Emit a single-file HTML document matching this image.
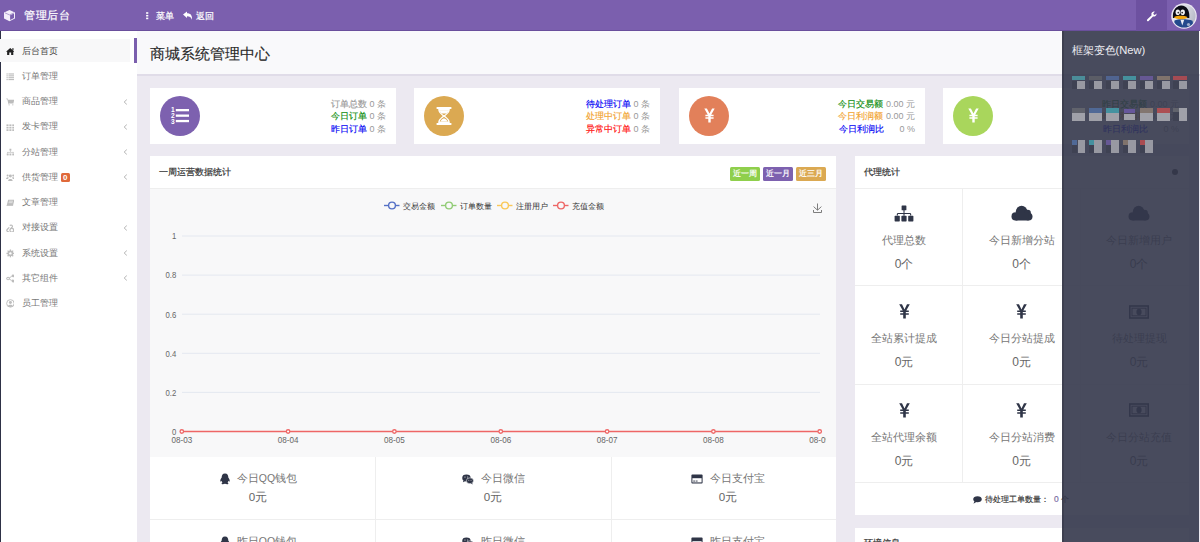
<!DOCTYPE html>
<html><head><meta charset="utf-8">
<style>
*{margin:0;padding:0;box-sizing:border-box}
html,body{width:1200px;height:542px;overflow:hidden;background:#ece9f1;font-family:"Liberation Sans",sans-serif;color:#333}
.a{position:absolute}
.t{position:absolute;white-space:nowrap;line-height:1}
#hdr{left:0;top:0;width:1200px;height:31px;background:#7b5fae;border-bottom:1px solid #6a4f9c}
#side{left:0;top:31px;width:137px;height:511px;background:#fff;border-left:1.2px solid #2e3146}
.si{position:absolute;left:0;width:137px;height:25px}
.si .tx{position:absolute;left:22px;top:0;line-height:25px;font-size:9px;color:#666}
.si .ic{position:absolute;left:6px;top:8px;width:9px;height:9px}
.si .chev{position:absolute;left:122px;top:0;line-height:25px;font-size:9px;color:#aaa}
.card{position:absolute;top:88px;width:246px;height:56px;background:#fff}
.circ{position:absolute;left:10px;top:8px;width:40px;height:40px;border-radius:50%}
.ct{position:absolute;right:10px;top:10px;font-size:9px;line-height:12.45px;text-align:right;white-space:nowrap;color:#999}
.panel{position:absolute;background:#fff}
.ct span{-webkit-text-stroke:0.15px currentColor}
</style></head><body>
<!-- header -->
<div id="hdr" class="a"></div>
<svg class="a" style="left:3px;top:9px" width="13" height="13" viewBox="0 0 13 13">
<polygon points="6.5,1 12,3.6 12,9.6 6.5,12.2 1,9.6 1,3.6" fill="#f3eefa"/>
<polygon points="7.1,6.3 11,4.5 11,9 7.1,10.9" fill="#7b5fae"/>
<polyline points="2,3.9 6.5,5.9 11,3.9" fill="none" stroke="#9f8cc6" stroke-width="0.8"/>
</svg>
<div class="t" style="left:24.3px;top:9.7px;font-size:11.4px;letter-spacing:0.5px;color:#fff;-webkit-text-stroke:0.2px #fff">管理后台</div>
<svg class="a" style="left:145px;top:11px" width="5" height="9" viewBox="0 0 5 9"><rect x="1.1" y="1.2" width="2.2" height="1.6" fill="#fff"/><rect x="1.1" y="3.9" width="2.2" height="1.6" fill="#fff"/><rect x="1.1" y="6.6" width="2.2" height="1.6" fill="#fff"/></svg>
<div class="t" style="left:155.5px;top:11.8px;font-size:9px;color:#fff;-webkit-text-stroke:0.2px #fff">菜单</div>
<svg class="a" style="left:182px;top:11px" width="11" height="9" viewBox="0 0 11 9"><path d="M1,3.6 L5,0.4 L5,2.3 C8.5,2.3 10.3,4.3 10,8.8 C9.2,6.2 7.6,5.2 5,5.2 L5,7 Z" fill="#fff"/></svg>
<div class="t" style="left:196px;top:11.8px;font-size:9px;color:#fff;-webkit-text-stroke:0.2px #fff">返回</div>
<div class="a" style="left:1136px;top:0;width:31px;height:31px;background:#6d51a0"></div>
<svg class="a" style="left:1146px;top:11px" width="11" height="11" viewBox="0 0 11 11"><path d="M1.2,8.6 L5.6,4.2 C5.0,2.6 5.6,1.1 7.2,0.7 C7.8,0.55 8.3,0.6 8.8,0.8 L7.3,2.3 L7.7,3.5 L8.9,3.9 L10.4,2.4 C10.6,3 10.5,3.7 10.2,4.2 C9.5,5.4 8.2,5.8 7.0,5.5 L2.6,9.9 C2.2,10.3 1.6,10.3 1.2,9.9 C0.8,9.5 0.8,9 1.2,8.6 Z" fill="#fff"/></svg>
<svg class="a" style="left:1171px;top:3px" width="26" height="26" viewBox="0 0 26 26">
<defs><clipPath id="cav"><circle cx="13" cy="13" r="11.6"/></clipPath>
<linearGradient id="gav" x1="0" y1="0" x2="1" y2="0.3"><stop offset="0" stop-color="#f2f2f6"/><stop offset="0.6" stop-color="#d9dbe3"/><stop offset="1" stop-color="#b9bdc9"/></linearGradient></defs>
<circle cx="13" cy="13" r="12.8" fill="#ebe6f3"/>
<g clip-path="url(#cav)">
<rect x="0" y="0" width="26" height="26" fill="url(#gav)"/>
<path d="M2.5,26 L3.5,17.5 C7,15.8 17,15.8 21.5,17.8 L23,26 Z" fill="#234a8c"/>
<path d="M9.5,16.8 L11.3,22.5 L13.2,16.8 Z" fill="#e8ecf4"/>
<circle cx="17.5" cy="21.5" r="1.6" fill="#9fb0cc"/>
<path d="M1.8,15 C1.4,8 4.5,2.6 10.2,2.6 C15.8,2.6 18.8,7.5 18.3,15 Z" fill="#0b0c16"/>
<ellipse cx="6.8" cy="9.2" rx="2.2" ry="2.8" fill="#f2f2f2"/><ellipse cx="11.7" cy="9.2" rx="2.2" ry="2.8" fill="#f2f2f2"/>
<circle cx="7.3" cy="9.6" r="0.9" fill="#333"/><circle cx="11.2" cy="9.6" r="0.9" fill="#333"/>
<path d="M2.8,14.2 C6,12.3 13.5,12.3 16.6,14.2 C15,16.8 5,16.8 2.8,14.2 Z" fill="#f3a60c"/>
</g></svg>
<!-- sidebar -->
<div id="side" class="a"></div>
<div class="a" style="left:0;top:39px;width:130px;height:23px;background:#f8f8f9"></div>
<svg class="a" style="left:5.6px;top:46.90px" width="8.8" height="8.8" viewBox="0 0 9.4 9.4"><path d="M4.5,1 L9,5 L7.8,5 L7.8,8.5 L5.5,8.5 L5.5,6 L3.5,6 L3.5,8.5 L1.2,8.5 L1.2,5 L0,5 Z" fill="#222"/><rect x="6.8" y="1.2" width="1.2" height="2.2" fill="#222"/></svg>
<div class="t" style="left:22px;top:46.50px;font-size:9px;color:#444">后台首页</div>
<svg class="a" style="left:5.6px;top:72.15px" width="8.8" height="8.8" viewBox="0 0 9.4 9.4"><g fill="#bcbcbc"><rect x="0.5" y="1.5" width="1.4" height="1.2"/><rect x="2.6" y="1.5" width="6.4" height="1.2"/><rect x="0.5" y="3.5" width="1.4" height="1.2"/><rect x="2.6" y="3.5" width="6.4" height="1.2"/><rect x="0.5" y="5.5" width="1.4" height="1.2"/><rect x="2.6" y="5.5" width="6.4" height="1.2"/><rect x="0.5" y="7.5" width="1.4" height="1.2"/><rect x="2.6" y="7.5" width="6.4" height="1.2"/></g></svg>
<div class="t" style="left:22px;top:71.75px;font-size:9px;color:#777">订单管理</div>
<svg class="a" style="left:5.6px;top:97.40px" width="8.8" height="8.8" viewBox="0 0 9.4 9.4"><g fill="#bcbcbc"><path d="M0.3,1.6 L1.8,1.6 L2.3,3 L8.8,3 L8,6.3 L3,6.3 L3.2,7 L8,7 L8,7.6 L2.6,7.6 L1.4,2.3 L0.3,2.3 Z"/><circle cx="3.3" cy="8.4" r="0.7"/><circle cx="7.3" cy="8.4" r="0.7"/></g></svg>
<div class="t" style="left:22px;top:97.00px;font-size:9px;color:#777">商品管理</div>
<svg class="a" style="left:123px;top:98.50px" width="5" height="6" viewBox="0 0 5 6"><polyline points="3.8,0.6 1.2,3 3.8,5.4" fill="none" stroke="#aaa" stroke-width="0.9"/></svg>
<svg class="a" style="left:5.6px;top:122.65px" width="8.8" height="8.8" viewBox="0 0 9.4 9.4"><g fill="#bcbcbc"><rect x="0.5" y="1.5" width="2.2" height="1.8"/><rect x="3.6" y="1.5" width="2.2" height="1.8"/><rect x="6.7" y="1.5" width="2.2" height="1.8"/><rect x="0.5" y="4.1" width="2.2" height="1.8"/><rect x="3.6" y="4.1" width="2.2" height="1.8"/><rect x="6.7" y="4.1" width="2.2" height="1.8"/><rect x="0.5" y="6.7" width="2.2" height="1.8"/><rect x="3.6" y="6.7" width="2.2" height="1.8"/><rect x="6.7" y="6.7" width="2.2" height="1.8"/></g></svg>
<div class="t" style="left:22px;top:122.25px;font-size:9px;color:#777">发卡管理</div>
<svg class="a" style="left:123px;top:123.75px" width="5" height="6" viewBox="0 0 5 6"><polyline points="3.8,0.6 1.2,3 3.8,5.4" fill="none" stroke="#aaa" stroke-width="0.9"/></svg>
<svg class="a" style="left:5.6px;top:147.90px" width="8.8" height="8.8" viewBox="0 0 9.4 9.4"><g fill="#bcbcbc"><rect x="3.7" y="0.8" width="2" height="2"/><rect x="4.4" y="2.6" width="0.7" height="1.6"/><rect x="1.5" y="4.2" width="6.5" height="0.7"/><rect x="1.5" y="4.2" width="0.7" height="1.6"/><rect x="7.3" y="4.2" width="0.7" height="1.6"/><rect x="0.8" y="5.9" width="2" height="2"/><rect x="3.7" y="5.9" width="2" height="2"/><rect x="6.7" y="5.9" width="2" height="2"/></g></svg>
<div class="t" style="left:22px;top:147.50px;font-size:9px;color:#777">分站管理</div>
<svg class="a" style="left:123px;top:149.00px" width="5" height="6" viewBox="0 0 5 6"><polyline points="3.8,0.6 1.2,3 3.8,5.4" fill="none" stroke="#aaa" stroke-width="0.9"/></svg>
<svg class="a" style="left:5.6px;top:173.15px" width="8.8" height="8.8" viewBox="0 0 9.4 9.4"><g fill="#bcbcbc"><circle cx="4.7" cy="3.3" r="1.6"/><path d="M2.3,8.6 C2.3,5.8 7.1,5.8 7.1,8.6 Z"/><circle cx="1.7" cy="2.6" r="1.1"/><circle cx="7.7" cy="2.6" r="1.1"/><path d="M0,6.5 C0,4.3 2.6,4.3 2.9,5 L2,6.5 Z"/><path d="M9.4,6.5 C9.4,4.3 6.8,4.3 6.5,5 L7.4,6.5 Z"/></g></svg>
<div class="t" style="left:22px;top:172.75px;font-size:9px;color:#777">供货管理</div>
<svg class="a" style="left:123px;top:174.25px" width="5" height="6" viewBox="0 0 5 6"><polyline points="3.8,0.6 1.2,3 3.8,5.4" fill="none" stroke="#aaa" stroke-width="0.9"/></svg>
<svg class="a" style="left:5.6px;top:198.40px" width="8.8" height="8.8" viewBox="0 0 9.4 9.4"><g fill="#bdbdbd"><path d="M2.3,1.8 L9,1.8 L7.6,7.6 L0.9,7.6 Z"/><rect x="0.6" y="7.6" width="7" height="0.9"/></g><path d="M3.2,3.4 L7.4,3.4 M2.8,5 L7,5" stroke="#fff" stroke-width="0.6"/></svg>
<div class="t" style="left:22px;top:198.00px;font-size:9px;color:#777">文章管理</div>
<svg class="a" style="left:5.6px;top:223.65px" width="8.8" height="8.8" viewBox="0 0 9.4 9.4"><g fill="none" stroke="#bcbcbc" stroke-width="1.3"><path d="M3,8 C1.2,8.5 0.2,7 1.5,5.6 L3.5,3.6"/><path d="M4,1.6 C5.4,0.4 7.5,1.6 6.6,3.3 L4.7,5.2"/><circle cx="6.2" cy="6.6" r="2"/></g></svg>
<div class="t" style="left:22px;top:223.25px;font-size:9px;color:#777">对接设置</div>
<svg class="a" style="left:123px;top:224.75px" width="5" height="6" viewBox="0 0 5 6"><polyline points="3.8,0.6 1.2,3 3.8,5.4" fill="none" stroke="#aaa" stroke-width="0.9"/></svg>
<svg class="a" style="left:5.6px;top:248.90px" width="8.8" height="8.8" viewBox="0 0 9.4 9.4"><g fill="#bcbcbc"><circle cx="4.7" cy="4.7" r="3.1"/><rect x="4" y="0.5" width="1.4" height="8.4"/><rect x="0.5" y="4" width="8.4" height="1.4"/><rect x="4" y="0.5" width="1.4" height="8.4" transform="rotate(45 4.7 4.7)"/><rect x="4" y="0.5" width="1.4" height="8.4" transform="rotate(-45 4.7 4.7)"/></g><circle cx="4.7" cy="4.7" r="1.3" fill="#fff"/></svg>
<div class="t" style="left:22px;top:248.50px;font-size:9px;color:#777">系统设置</div>
<svg class="a" style="left:123px;top:250.00px" width="5" height="6" viewBox="0 0 5 6"><polyline points="3.8,0.6 1.2,3 3.8,5.4" fill="none" stroke="#aaa" stroke-width="0.9"/></svg>
<svg class="a" style="left:5.6px;top:274.15px" width="8.8" height="8.8" viewBox="0 0 9.4 9.4"><g fill="#bcbcbc"><circle cx="2.2" cy="4.8" r="1.9"/><circle cx="7.5" cy="2" r="1.5"/><circle cx="7.5" cy="7.5" r="1.5"/></g><path d="M3.5,4.1 L6.1,2.6 M3.5,5.5 L6.1,6.9" stroke="#bcbcbc" stroke-width="1"/><circle cx="2.2" cy="4.8" r="0.9" fill="#fff"/></svg>
<div class="t" style="left:22px;top:273.75px;font-size:9px;color:#777">其它组件</div>
<svg class="a" style="left:123px;top:275.25px" width="5" height="6" viewBox="0 0 5 6"><polyline points="3.8,0.6 1.2,3 3.8,5.4" fill="none" stroke="#aaa" stroke-width="0.9"/></svg>
<svg class="a" style="left:5.6px;top:299.40px" width="8.8" height="8.8" viewBox="0 0 9.4 9.4"><circle cx="4.7" cy="4.7" r="4" fill="none" stroke="#bdbdbd" stroke-width="1"/><circle cx="4.7" cy="3.8" r="1.6" fill="#bdbdbd"/><path d="M2,7.6 C2.5,5.6 6.9,5.6 7.4,7.6 C6,8.8 3.4,8.8 2,7.6 Z" fill="#bdbdbd"/></svg>
<div class="t" style="left:22px;top:299.00px;font-size:9px;color:#777">员工管理</div>
<div class="a" style="left:60.5px;top:173.3px;width:9.5px;height:9px;background:#e0693a;border-radius:1.5px;color:#fff;font-size:8px;font-weight:bold;line-height:9px;text-align:center">0</div>
<!-- title -->
<div class="a" style="left:137px;top:31px;width:1063px;height:45px;background:#f9f9fb;border-bottom:2px solid #e0dce8"></div>
<div class="a" style="left:134px;top:38px;width:3px;height:25px;background:#7b5fae"></div>
<div class="t" style="left:150px;top:46px;font-size:15px;color:#2b2b2b;-webkit-text-stroke:0.15px #2b2b2b">商城系统管理中心</div>

<!-- cards -->
<div class="card" style="left:150px"><div class="circ" style="background:#7d61af"><svg class="a" style="left:0;top:0" width="40" height="40" viewBox="0 0 40 40"><g fill="#fff" font-family="Liberation Sans" font-weight="bold" font-size="6.6" text-anchor="middle"><text x="12.8" y="16">1</text><text x="12.8" y="21.6">2</text><text x="12.8" y="27.6">3</text></g><g fill="#fff"><rect x="15.8" y="13" width="13.2" height="2.3"/><rect x="15.8" y="18.5" width="13.2" height="2.3"/><rect x="15.8" y="23.9" width="13.2" height="2.3"/></g></svg></div><div class="ct"><span style="color:#9a9a9a">订单总数</span> 0 条<br><span style="color:#078a07">今日订单</span> 0 条<br><span style="color:#0000f5">昨日订单</span> 0 条</div></div><div class="card" style="left:414px"><div class="circ" style="background:#dba952"><svg class="a" style="left:12px;top:11px" width="16" height="18" viewBox="0 0 16 18"><g fill="#fff"><rect x="0.6" y="0" width="14.8" height="2"/><rect x="0.6" y="16" width="14.8" height="2"/><path fill-rule="evenodd" d="M2.2,2 L13.8,2 C13.8,6.2 10.2,7.6 9.3,9 C10.2,10.4 13.8,11.8 13.8,16 L2.2,16 C2.2,11.8 5.8,10.4 6.7,9 C5.8,7.6 2.2,6.2 2.2,2 Z M3.7,3.4 C3.9,5.6 6.6,7 8,8.3 C9.4,7 12.1,5.6 12.3,3.4 Z M3.7,14.6 L12.3,14.6 C12.1,12.4 9.4,11 8,9.7 C6.6,11 3.9,12.4 3.7,14.6 Z"/><path d="M3.6,3.3 L12.4,3.3 C12.3,4.8 11.3,5.8 10.4,6.5 L5.6,6.5 C4.7,5.8 3.7,4.8 3.6,3.3 Z"/><path d="M4.6,14.6 C5,12.6 7,11.6 8,11.2 C9,11.6 11,12.6 11.4,14.6 Z"/></g></svg></div><div class="ct"><span style="color:#0000f5">待处理订单</span> 0 条<br><span style="color:#f2a22c">处理中订单</span> 0 条<br><span style="color:#ff0a0a">异常中订单</span> 0 条</div></div><div class="card" style="left:679px"><div class="circ" style="background:#e2805a"><svg class="a" style="left:14.5px;top:12px" width="11" height="15" viewBox="0 0 11 15"><g fill="#fff"><path d="M0.3,0.5 L2.9,0.5 L5.5,5.6 L8.1,0.5 L10.7,0.5 L7.2,6.8 L9.6,6.8 L9.6,8.2 L6.7,8.2 L6.7,9.3 L9.6,9.3 L9.6,10.7 L6.7,10.7 L6.7,14.5 L4.3,14.5 L4.3,10.7 L1.4,10.7 L1.4,9.3 L4.3,9.3 L4.3,8.2 L1.4,8.2 L1.4,6.8 L3.8,6.8 Z"/></g></svg></div><div class="ct"><span style="color:#078a07">今日交易额</span> 0.00 元<br><span style="color:#f2a22c">今日利润额</span> 0.00 元<br><span style="color:#0000f5">今日利润比</span> &nbsp; &nbsp; &nbsp;0 %</div></div><div class="card" style="left:943px"><div class="circ" style="background:#a9d65c"><svg class="a" style="left:14.5px;top:12px" width="11" height="15" viewBox="0 0 11 15"><g fill="#fff"><path d="M0.3,0.5 L2.9,0.5 L5.5,5.6 L8.1,0.5 L10.7,0.5 L7.2,6.8 L9.6,6.8 L9.6,8.2 L6.7,8.2 L6.7,9.3 L9.6,9.3 L9.6,10.7 L6.7,10.7 L6.7,14.5 L4.3,14.5 L4.3,10.7 L1.4,10.7 L1.4,9.3 L4.3,9.3 L4.3,8.2 L1.4,8.2 L1.4,6.8 L3.8,6.8 Z"/></g></svg></div><div class="ct"><span style="color:#078a07">昨日交易额</span> 0.00 元<br><span style="color:#f2a22c">昨日利润额</span> 0.00 元<br><span style="color:#0000f5">昨日利润比</span> &nbsp; &nbsp; &nbsp;0 %</div></div>

<!-- chart panel -->
<div class="panel" style="left:150px;top:156px;width:686px;height:386px"></div>
<div class="a" style="left:150px;top:187.5px;width:686px;height:1px;background:#eeeeee"></div>
<div class="t" style="left:159px;top:168px;font-size:9px;color:#333;-webkit-text-stroke:0.2px #333">一周运营数据统计</div>
<div class="a" style="left:730px;top:167px;width:30px;height:13.5px;background:#8fcf4c;border-radius:1.5px;color:#fff;font-size:8.3px;line-height:13.5px;text-align:center;white-space:nowrap;-webkit-text-stroke:0.2px #fff">近一周</div>
<div class="a" style="left:763px;top:167px;width:30px;height:13.5px;background:#7d61af;border-radius:1.5px;color:#fff;font-size:8.3px;line-height:13.5px;text-align:center;white-space:nowrap;-webkit-text-stroke:0.2px #fff">近一月</div>
<div class="a" style="left:796px;top:167px;width:30px;height:13.5px;background:#dba952;border-radius:1.5px;color:#fff;font-size:8.3px;line-height:13.5px;text-align:center;white-space:nowrap;-webkit-text-stroke:0.2px #fff">近三月</div>
<div class="a" style="left:150px;top:188.5px;width:686px;height:268px;background:#f8f8f9"></div>
<svg class="a" style="left:150px;top:188px" width="686" height="268" viewBox="150 188 686 268"><line x1="384" y1="205.5" x2="399.5" y2="205.5" stroke="#5470c6" stroke-width="1.4"/><circle cx="392" cy="205.5" r="3.4" fill="#f8f8f9" stroke="#5470c6" stroke-width="1.4"/><text x="402.75" y="208.6" font-size="7.6" fill="#333">交易金额</text><line x1="441" y1="205.5" x2="456.5" y2="205.5" stroke="#91cc75" stroke-width="1.4"/><circle cx="449" cy="205.5" r="3.4" fill="#f8f8f9" stroke="#91cc75" stroke-width="1.4"/><text x="459.75" y="208.6" font-size="7.6" fill="#333">订单数量</text><line x1="497" y1="205.5" x2="512.5" y2="205.5" stroke="#fac858" stroke-width="1.4"/><circle cx="505" cy="205.5" r="3.4" fill="#f8f8f9" stroke="#fac858" stroke-width="1.4"/><text x="515.75" y="208.6" font-size="7.6" fill="#333">注册用户</text><line x1="553" y1="205.5" x2="568.5" y2="205.5" stroke="#ee6666" stroke-width="1.4"/><circle cx="561" cy="205.5" r="3.4" fill="#f8f8f9" stroke="#ee6666" stroke-width="1.4"/><text x="571.75" y="208.6" font-size="7.6" fill="#333">充值金额</text><g fill="none" stroke="#777" stroke-width="0.95"><path d="M817.5,203.5 L817.5,210"/><path d="M813.6,206.6 L817.5,210.2 L821.4,206.6"/><path d="M813.5,210 L813.5,212.5 L821.5,212.5 L821.5,210"/></g><line x1="182" y1="236" x2="820" y2="236" stroke="#e4e8f0" stroke-width="1"/><text transform="translate(176.3,239.3) scale(0.86,1)" font-size="9" fill="#666" text-anchor="end">1</text><line x1="182" y1="275.1" x2="820" y2="275.1" stroke="#e4e8f0" stroke-width="1"/><text transform="translate(176.3,278.4) scale(0.86,1)" font-size="9" fill="#666" text-anchor="end">0.8</text><line x1="182" y1="314.2" x2="820" y2="314.2" stroke="#e4e8f0" stroke-width="1"/><text transform="translate(176.3,317.5) scale(0.86,1)" font-size="9" fill="#666" text-anchor="end">0.6</text><line x1="182" y1="353.3" x2="820" y2="353.3" stroke="#e4e8f0" stroke-width="1"/><text transform="translate(176.3,356.6) scale(0.86,1)" font-size="9" fill="#666" text-anchor="end">0.4</text><line x1="182" y1="392.4" x2="820" y2="392.4" stroke="#e4e8f0" stroke-width="1"/><text transform="translate(176.3,395.7) scale(0.86,1)" font-size="9" fill="#666" text-anchor="end">0.2</text><text transform="translate(176.3,434.8) scale(0.86,1)" font-size="9" fill="#666" text-anchor="end">0</text><line x1="181.8" y1="431.5" x2="819.7" y2="431.5" stroke="#ee6666" stroke-width="1.5"/><circle cx="181.8" cy="431.5" r="1.75" fill="#fff" stroke="#ee6666" stroke-width="1.3"/><text transform="translate(181.8,443.3) scale(0.9,1)" font-size="9" fill="#666" text-anchor="middle">08-03</text><circle cx="288.1" cy="431.5" r="1.75" fill="#fff" stroke="#ee6666" stroke-width="1.3"/><text transform="translate(288.1,443.3) scale(0.9,1)" font-size="9" fill="#666" text-anchor="middle">08-04</text><circle cx="394.4" cy="431.5" r="1.75" fill="#fff" stroke="#ee6666" stroke-width="1.3"/><text transform="translate(394.4,443.3) scale(0.9,1)" font-size="9" fill="#666" text-anchor="middle">08-05</text><circle cx="500.8" cy="431.5" r="1.75" fill="#fff" stroke="#ee6666" stroke-width="1.3"/><text transform="translate(500.8,443.3) scale(0.9,1)" font-size="9" fill="#666" text-anchor="middle">08-06</text><circle cx="607.1" cy="431.5" r="1.75" fill="#fff" stroke="#ee6666" stroke-width="1.3"/><text transform="translate(607.1,443.3) scale(0.9,1)" font-size="9" fill="#666" text-anchor="middle">08-07</text><circle cx="713.4" cy="431.5" r="1.75" fill="#fff" stroke="#ee6666" stroke-width="1.3"/><text transform="translate(713.4,443.3) scale(0.9,1)" font-size="9" fill="#666" text-anchor="middle">08-08</text><circle cx="819.7" cy="431.5" r="1.75" fill="#fff" stroke="#ee6666" stroke-width="1.3"/><text transform="translate(819.7,443.3) scale(0.9,1)" font-size="9" fill="#666" text-anchor="middle">08-09</text><rect x="826" y="436" width="10" height="12" fill="#f8f8f9"/></svg>
<div class="a" style="left:375px;top:456.5px;width:1px;height:86px;background:#eeeeee"></div>
<div class="a" style="left:611px;top:456.5px;width:1px;height:86px;background:#eeeeee"></div>
<div class="a" style="left:150px;top:519px;width:686px;height:1px;background:#eeeeee"></div>
<div class="a" style="left:138px;top:472.8px;width:240px;text-align:center;font-size:10.5px;line-height:11px;color:#777;white-space:nowrap"><svg width="12" height="12" viewBox="0 0 12 12" style="vertical-align:baseline;margin:-12px 6px -12px 0;position:relative;top:-8.5px"><path d="M6,0.6 C8.6,0.6 9.3,2.8 9.3,4.4 C10.3,5.6 11,7 10.6,8.6 C10.2,8.8 9.8,8.3 9.5,7.8 C9.3,8.6 9,9.2 8.5,9.6 C9.4,10 9.6,10.6 9.2,11 C8.6,11.5 7,11.3 6,10.8 C5,11.3 3.4,11.5 2.8,11 C2.4,10.6 2.6,10 3.5,9.6 C3,9.2 2.7,8.6 2.5,7.8 C2.2,8.3 1.8,8.8 1.4,8.6 C1,7 1.7,5.6 2.7,4.4 C2.7,2.8 3.4,0.6 6,0.6 Z" fill="#2f3547"/></svg>今日QQ钱包</div>
<div class="a" style="left:138px;top:490.8px;width:240px;text-align:center;font-size:11.6px;line-height:12px;color:#666;white-space:nowrap">0元</div>
<div class="a" style="left:138px;top:535.8px;width:240px;text-align:center;font-size:10.5px;line-height:11px;color:#777;white-space:nowrap"><svg width="12" height="12" viewBox="0 0 12 12" style="vertical-align:baseline;margin:-12px 6px -12px 0;position:relative;top:-8.5px"><path d="M6,0.6 C8.6,0.6 9.3,2.8 9.3,4.4 C10.3,5.6 11,7 10.6,8.6 C10.2,8.8 9.8,8.3 9.5,7.8 C9.3,8.6 9,9.2 8.5,9.6 C9.4,10 9.6,10.6 9.2,11 C8.6,11.5 7,11.3 6,10.8 C5,11.3 3.4,11.5 2.8,11 C2.4,10.6 2.6,10 3.5,9.6 C3,9.2 2.7,8.6 2.5,7.8 C2.2,8.3 1.8,8.8 1.4,8.6 C1,7 1.7,5.6 2.7,4.4 C2.7,2.8 3.4,0.6 6,0.6 Z" fill="#2f3547"/></svg>昨日QQ钱包</div>
<div class="a" style="left:138px;top:553.8px;width:240px;text-align:center;font-size:11.6px;line-height:12px;color:#666;white-space:nowrap">0元</div>
<div class="a" style="left:373px;top:472.8px;width:240px;text-align:center;font-size:10.5px;line-height:11px;color:#777;white-space:nowrap"><svg width="12" height="11" viewBox="0 0 13 12" style="vertical-align:baseline;margin:-12px 7px -12px 0;position:relative;top:-8.8px"><ellipse cx="4.8" cy="4.4" rx="4.6" ry="3.8" fill="#2f3547"/><path d="M1.5,7 L1,9 L3.5,7.6 Z" fill="#2f3547"/><ellipse cx="8.6" cy="7.4" rx="3.9" ry="3.2" fill="#2f3547" stroke="#fff" stroke-width="0.6"/><path d="M11,9.8 L11.6,11.4 L9.6,10.4 Z" fill="#2f3547"/><circle cx="3.2" cy="3.2" r="0.6" fill="#fff"/><circle cx="6.2" cy="3.2" r="0.6" fill="#fff"/><circle cx="7.4" cy="6.8" r="0.5" fill="#fff"/><circle cx="9.8" cy="6.8" r="0.5" fill="#fff"/></svg>今日微信</div>
<div class="a" style="left:373px;top:490.8px;width:240px;text-align:center;font-size:11.6px;line-height:12px;color:#666;white-space:nowrap">0元</div>
<div class="a" style="left:373px;top:535.8px;width:240px;text-align:center;font-size:10.5px;line-height:11px;color:#777;white-space:nowrap"><svg width="12" height="11" viewBox="0 0 13 12" style="vertical-align:baseline;margin:-12px 7px -12px 0;position:relative;top:-8.8px"><ellipse cx="4.8" cy="4.4" rx="4.6" ry="3.8" fill="#2f3547"/><path d="M1.5,7 L1,9 L3.5,7.6 Z" fill="#2f3547"/><ellipse cx="8.6" cy="7.4" rx="3.9" ry="3.2" fill="#2f3547" stroke="#fff" stroke-width="0.6"/><path d="M11,9.8 L11.6,11.4 L9.6,10.4 Z" fill="#2f3547"/><circle cx="3.2" cy="3.2" r="0.6" fill="#fff"/><circle cx="6.2" cy="3.2" r="0.6" fill="#fff"/><circle cx="7.4" cy="6.8" r="0.5" fill="#fff"/><circle cx="9.8" cy="6.8" r="0.5" fill="#fff"/></svg>昨日微信</div>
<div class="a" style="left:373px;top:553.8px;width:240px;text-align:center;font-size:11.6px;line-height:12px;color:#666;white-space:nowrap">0元</div>
<div class="a" style="left:608px;top:472.8px;width:240px;text-align:center;font-size:10.5px;line-height:11px;color:#777;white-space:nowrap"><svg width="12" height="10" viewBox="0 0 12 10" style="vertical-align:baseline;margin:-12px 7px -12px 0;position:relative;top:-9.5px"><rect x="0.4" y="0.6" width="11.2" height="8.8" rx="0.9" fill="#2f3547"/><rect x="1.4" y="4.2" width="9.2" height="4.2" fill="#fff"/><rect x="2.2" y="6.6" width="2.2" height="0.9" fill="#2f3547"/><rect x="5" y="6.6" width="1.6" height="0.9" fill="#2f3547"/></svg>今日支付宝</div>
<div class="a" style="left:608px;top:490.8px;width:240px;text-align:center;font-size:11.6px;line-height:12px;color:#666;white-space:nowrap">0元</div>
<div class="a" style="left:608px;top:535.8px;width:240px;text-align:center;font-size:10.5px;line-height:11px;color:#777;white-space:nowrap"><svg width="12" height="10" viewBox="0 0 12 10" style="vertical-align:baseline;margin:-12px 7px -12px 0;position:relative;top:-9.5px"><rect x="0.4" y="0.6" width="11.2" height="8.8" rx="0.9" fill="#2f3547"/><rect x="1.4" y="4.2" width="9.2" height="4.2" fill="#fff"/><rect x="2.2" y="6.6" width="2.2" height="0.9" fill="#2f3547"/><rect x="5" y="6.6" width="1.6" height="0.9" fill="#2f3547"/></svg>昨日支付宝</div>
<div class="a" style="left:608px;top:553.8px;width:240px;text-align:center;font-size:11.6px;line-height:12px;color:#666;white-space:nowrap">0元</div>
<div class="panel" style="left:855px;top:156px;width:334px;height:358.6px"></div>
<div class="a" style="left:855px;top:187.5px;width:334px;height:1px;background:#eeeeee"></div>
<div class="t" style="left:864.4px;top:167.5px;font-size:9px;color:#333;-webkit-text-stroke:0.2px #333">代理统计</div>
<div class="a" style="left:1172px;top:169.3px;width:6px;height:6px;border-radius:50%;background:#333"></div>
<div class="a" style="left:855px;top:285.2px;width:334px;height:1px;background:#eeeeee"></div>
<div class="a" style="left:855px;top:384.1px;width:334px;height:1px;background:#eeeeee"></div>
<div class="a" style="left:855px;top:482.1px;width:334px;height:1px;background:#eeeeee"></div>
<div class="a" style="left:962px;top:188.5px;width:1px;height:294px;background:#eeeeee"></div>
<div class="a" style="left:1080px;top:188.5px;width:1px;height:294px;background:#eeeeee"></div>
<div class="a" style="left:894.00px;top:204.50px;width:20px;height:17px"><svg width="20" height="17" viewBox="0 0 20 17"><g fill="#2f3547"><rect x="7.6" y="0.5" width="4.8" height="4.8" rx="0.6"/><rect x="9.45" y="5" width="1.1" height="2.9"/><path d="M2.8,10.6 L2.8,9.4 C2.8,8.4 3.3,7.9 4.3,7.9 L15.7,7.9 C16.7,7.9 17.2,8.4 17.2,9.4 L17.2,10.6 L16.1,10.6 L16.1,9.4 C16.1,9.1 16,9 15.7,9 L4.3,9 C4,9 3.9,9.1 3.9,9.4 L3.9,10.6 Z"/><rect x="9.45" y="8.5" width="1.1" height="2.3"/><rect x="0.6" y="10.8" width="5.2" height="5.6" rx="0.6"/><rect x="7.4" y="10.8" width="5.2" height="5.6" rx="0.6"/><rect x="14.2" y="10.8" width="5.2" height="5.6" rx="0.6"/></g></svg></div>
<div class="a" style="left:844.00px;top:234.70px;width:120px;text-align:center;font-size:10.7px;line-height:11px;color:#777;white-space:nowrap">代理总数</div>
<div class="a" style="left:844.00px;top:257.50px;width:120px;text-align:center;font-size:12px;line-height:12px;color:#666;white-space:nowrap">0个</div>
<div class="a" style="left:1010.50px;top:205.00px;width:22px;height:16px"><svg width="22" height="16" viewBox="0 0 22 16"><g fill="#2f3547"><circle cx="4.6" cy="11.4" r="4.1"/><circle cx="10.6" cy="6.6" r="5.8"/><circle cx="16.6" cy="8" r="3.3"/><circle cx="17.6" cy="11.6" r="3.9"/><rect x="4.6" y="8" width="13" height="7.5"/></g></svg></div>
<div class="a" style="left:961.50px;top:234.70px;width:120px;text-align:center;font-size:10.7px;line-height:11px;color:#777;white-space:nowrap">今日新增分站</div>
<div class="a" style="left:961.50px;top:257.50px;width:120px;text-align:center;font-size:12px;line-height:12px;color:#666;white-space:nowrap">0个</div>
<div class="a" style="left:1128.00px;top:205.00px;width:22px;height:16px"><svg width="22" height="16" viewBox="0 0 22 16"><g fill="#2f3547"><circle cx="4.6" cy="11.4" r="4.1"/><circle cx="10.6" cy="6.6" r="5.8"/><circle cx="16.6" cy="8" r="3.3"/><circle cx="17.6" cy="11.6" r="3.9"/><rect x="4.6" y="8" width="13" height="7.5"/></g></svg></div>
<div class="a" style="left:1079.00px;top:234.70px;width:120px;text-align:center;font-size:10.7px;line-height:11px;color:#777;white-space:nowrap">今日新增用户</div>
<div class="a" style="left:1079.00px;top:257.50px;width:120px;text-align:center;font-size:12px;line-height:12px;color:#666;white-space:nowrap">0个</div>
<div class="a" style="left:898.50px;top:304.00px;width:11px;height:15px"><svg width="11" height="15" viewBox="0 0 11 15"><path d="M0.2,0.3 L3,0.3 L5.5,5.4 L8,0.3 L10.8,0.3 L7.3,6.6 L9.8,6.6 L9.8,8.1 L6.8,8.1 L6.8,9.2 L9.8,9.2 L9.8,10.7 L6.8,10.7 L6.8,14.6 L4.2,14.6 L4.2,10.7 L1.2,10.7 L1.2,9.2 L4.2,9.2 L4.2,8.1 L1.2,8.1 L1.2,6.6 L3.7,6.6 Z" fill="#2f3547"/></svg></div>
<div class="a" style="left:844.00px;top:333.20px;width:120px;text-align:center;font-size:10.7px;line-height:11px;color:#777;white-space:nowrap">全站累计提成</div>
<div class="a" style="left:844.00px;top:356.00px;width:120px;text-align:center;font-size:12px;line-height:12px;color:#666;white-space:nowrap">0元</div>
<div class="a" style="left:1016.00px;top:304.00px;width:11px;height:15px"><svg width="11" height="15" viewBox="0 0 11 15"><path d="M0.2,0.3 L3,0.3 L5.5,5.4 L8,0.3 L10.8,0.3 L7.3,6.6 L9.8,6.6 L9.8,8.1 L6.8,8.1 L6.8,9.2 L9.8,9.2 L9.8,10.7 L6.8,10.7 L6.8,14.6 L4.2,14.6 L4.2,10.7 L1.2,10.7 L1.2,9.2 L4.2,9.2 L4.2,8.1 L1.2,8.1 L1.2,6.6 L3.7,6.6 Z" fill="#2f3547"/></svg></div>
<div class="a" style="left:961.50px;top:333.20px;width:120px;text-align:center;font-size:10.7px;line-height:11px;color:#777;white-space:nowrap">今日分站提成</div>
<div class="a" style="left:961.50px;top:356.00px;width:120px;text-align:center;font-size:12px;line-height:12px;color:#666;white-space:nowrap">0元</div>
<div class="a" style="left:1129.00px;top:304.50px;width:20px;height:14px"><svg width="20" height="14" viewBox="0 0 20 14"><rect x="0.8" y="1" width="18.4" height="12" fill="none" stroke="#2f3547" stroke-width="1.6"/><rect x="3" y="3.2" width="14" height="7.6" fill="none" stroke="#2f3547" stroke-width="1"/><ellipse cx="10" cy="7" rx="2.6" ry="3.2" fill="#2f3547"/></svg></div>
<div class="a" style="left:1079.00px;top:333.20px;width:120px;text-align:center;font-size:10.7px;line-height:11px;color:#777;white-space:nowrap">待处理提现</div>
<div class="a" style="left:1079.00px;top:356.00px;width:120px;text-align:center;font-size:12px;line-height:12px;color:#666;white-space:nowrap">0元</div>
<div class="a" style="left:898.50px;top:402.50px;width:11px;height:15px"><svg width="11" height="15" viewBox="0 0 11 15"><path d="M0.2,0.3 L3,0.3 L5.5,5.4 L8,0.3 L10.8,0.3 L7.3,6.6 L9.8,6.6 L9.8,8.1 L6.8,8.1 L6.8,9.2 L9.8,9.2 L9.8,10.7 L6.8,10.7 L6.8,14.6 L4.2,14.6 L4.2,10.7 L1.2,10.7 L1.2,9.2 L4.2,9.2 L4.2,8.1 L1.2,8.1 L1.2,6.6 L3.7,6.6 Z" fill="#2f3547"/></svg></div>
<div class="a" style="left:844.00px;top:431.70px;width:120px;text-align:center;font-size:10.7px;line-height:11px;color:#777;white-space:nowrap">全站代理余额</div>
<div class="a" style="left:844.00px;top:454.50px;width:120px;text-align:center;font-size:12px;line-height:12px;color:#666;white-space:nowrap">0元</div>
<div class="a" style="left:1016.00px;top:402.50px;width:11px;height:15px"><svg width="11" height="15" viewBox="0 0 11 15"><path d="M0.2,0.3 L3,0.3 L5.5,5.4 L8,0.3 L10.8,0.3 L7.3,6.6 L9.8,6.6 L9.8,8.1 L6.8,8.1 L6.8,9.2 L9.8,9.2 L9.8,10.7 L6.8,10.7 L6.8,14.6 L4.2,14.6 L4.2,10.7 L1.2,10.7 L1.2,9.2 L4.2,9.2 L4.2,8.1 L1.2,8.1 L1.2,6.6 L3.7,6.6 Z" fill="#2f3547"/></svg></div>
<div class="a" style="left:961.50px;top:431.70px;width:120px;text-align:center;font-size:10.7px;line-height:11px;color:#777;white-space:nowrap">今日分站消费</div>
<div class="a" style="left:961.50px;top:454.50px;width:120px;text-align:center;font-size:12px;line-height:12px;color:#666;white-space:nowrap">0元</div>
<div class="a" style="left:1129.00px;top:403.00px;width:20px;height:14px"><svg width="20" height="14" viewBox="0 0 20 14"><rect x="0.8" y="1" width="18.4" height="12" fill="none" stroke="#2f3547" stroke-width="1.6"/><rect x="3" y="3.2" width="14" height="7.6" fill="none" stroke="#2f3547" stroke-width="1"/><ellipse cx="10" cy="7" rx="2.6" ry="3.2" fill="#2f3547"/></svg></div>
<div class="a" style="left:1079.00px;top:431.70px;width:120px;text-align:center;font-size:10.7px;line-height:11px;color:#777;white-space:nowrap">今日分站充值</div>
<div class="a" style="left:1079.00px;top:454.50px;width:120px;text-align:center;font-size:12px;line-height:12px;color:#666;white-space:nowrap">0元</div>
<svg width="9" height="8" viewBox="0 0 9 8" style="position:absolute;left:972.5px;top:495.9px"><path d="M4.5,0.3 C7,0.3 8.8,1.6 8.8,3.3 C8.8,5 7,6.3 4.5,6.3 C4,6.3 3.5,6.2 3.1,6.1 C2.4,6.8 1.4,7.4 0.3,7.5 C0.9,6.9 1.3,6.2 1.4,5.5 C0.7,4.9 0.2,4.2 0.2,3.3 C0.2,1.6 2,0.3 4.5,0.3 Z" fill="#2f3547"/></svg>
<div class="t" style="left:984.5px;top:495.4px;font-size:8.45px;color:#333;-webkit-text-stroke:0.15px #333">待处理工单数量：<span style="color:#8e7cc3;padding-left:5.5px">0</span> 个</div>
<div class="panel" style="left:855px;top:527.7px;width:334px;height:20px"></div>
<div class="t" style="left:864.4px;top:539px;font-size:9px;color:#333;-webkit-text-stroke:0.2px #333">环境信息</div>

<!-- overlay -->
<div class="a" style="left:1062px;top:31px;width:137px;height:511px;background:rgba(52,55,75,0.9)"></div>
<div class="a" style="left:1062px;top:31px;width:2px;height:511px;background:rgba(30,32,45,0.25)"></div>
<div class="t" style="left:1071.5px;top:44.8px;font-size:11.2px;color:#ececf2">框架变色(New)</div>
<div class="a" style="left:1072.0px;top:76.2px;width:13.3px;height:4.3px;background:#4b8d99"></div>
<div class="a" style="left:1072.0px;top:80.5px;width:5.2px;height:8.5px;background:#3f4253"></div>
<div class="a" style="left:1077.2px;top:80.5px;width:8.1px;height:8.5px;background:#9899a2"></div>
<div class="a" style="left:1088.9px;top:76.2px;width:13.3px;height:4.3px;background:#5b5d66"></div>
<div class="a" style="left:1088.9px;top:80.5px;width:5.2px;height:8.5px;background:#3f4253"></div>
<div class="a" style="left:1094.1px;top:80.5px;width:8.1px;height:8.5px;background:#9899a2"></div>
<div class="a" style="left:1105.8px;top:76.2px;width:13.3px;height:4.3px;background:#506490"></div>
<div class="a" style="left:1105.8px;top:80.5px;width:5.2px;height:8.5px;background:#3f4253"></div>
<div class="a" style="left:1111.0px;top:80.5px;width:8.1px;height:8.5px;background:#9899a2"></div>
<div class="a" style="left:1122.7px;top:76.2px;width:13.3px;height:4.3px;background:#45919d"></div>
<div class="a" style="left:1122.7px;top:80.5px;width:5.2px;height:8.5px;background:#3f4253"></div>
<div class="a" style="left:1127.9px;top:80.5px;width:8.1px;height:8.5px;background:#9899a2"></div>
<div class="a" style="left:1139.6px;top:76.2px;width:13.3px;height:4.3px;background:#665894"></div>
<div class="a" style="left:1139.6px;top:80.5px;width:5.2px;height:8.5px;background:#3f4253"></div>
<div class="a" style="left:1144.8px;top:80.5px;width:8.1px;height:8.5px;background:#9899a2"></div>
<div class="a" style="left:1156.5px;top:76.2px;width:13.3px;height:4.3px;background:#80736c"></div>
<div class="a" style="left:1156.5px;top:80.5px;width:5.2px;height:8.5px;background:#3f4253"></div>
<div class="a" style="left:1161.7px;top:80.5px;width:8.1px;height:8.5px;background:#9899a2"></div>
<div class="a" style="left:1173.4px;top:76.2px;width:13.3px;height:4.3px;background:#a54b53"></div>
<div class="a" style="left:1173.4px;top:80.5px;width:5.2px;height:8.5px;background:#3f4253"></div>
<div class="a" style="left:1178.6px;top:80.5px;width:8.1px;height:8.5px;background:#9899a2"></div>
<div class="a" style="left:1072.0px;top:108.2px;width:13.3px;height:4.6px;background:#61636c"></div>
<div class="a" style="left:1072.0px;top:112.8px;width:13.3px;height:8.3px;background:#a0a1a9"></div>
<div class="a" style="left:1088.9px;top:108.2px;width:13.3px;height:4.6px;background:#506996"></div>
<div class="a" style="left:1088.9px;top:112.8px;width:13.3px;height:8.3px;background:#a0a1a9"></div>
<div class="a" style="left:1105.8px;top:108.2px;width:13.3px;height:4.6px;background:#4592a0"></div>
<div class="a" style="left:1105.8px;top:112.8px;width:13.3px;height:8.3px;background:#a0a1a9"></div>
<div class="a" style="left:1123.8px;top:109.3px;width:11.3px;height:4.2px;background:#66579b"></div>
<div class="a" style="left:1123.8px;top:113.5px;width:11.3px;height:6.6px;background:#a0a1a9"></div>
<div class="a" style="left:1139.6px;top:108.2px;width:13.3px;height:4.6px;background:#827670"></div>
<div class="a" style="left:1139.6px;top:112.8px;width:13.3px;height:8.3px;background:#a0a1a9"></div>
<div class="a" style="left:1156.5px;top:108.2px;width:13.3px;height:4.6px;background:#ac4f53"></div>
<div class="a" style="left:1156.5px;top:112.8px;width:13.3px;height:8.3px;background:#a0a1a9"></div>
<div class="a" style="left:1173.4px;top:108.2px;width:5.4px;height:4.2px;background:#61636c"></div>
<div class="a" style="left:1173.4px;top:112.4px;width:5.4px;height:8.7px;background:#3f4253"></div>
<div class="a" style="left:1178.9px;top:107.8px;width:7.8px;height:13.3px;background:#a0a1a9"></div>
<div class="a" style="left:1072.0px;top:140px;width:5.4px;height:5.2px;background:#506996"></div>
<div class="a" style="left:1072.0px;top:145.2px;width:5.4px;height:8.2px;background:#3f4253"></div>
<div class="a" style="left:1077.5px;top:140px;width:7.8px;height:13.4px;background:#9899a2"></div>
<div class="a" style="left:1088.9px;top:140px;width:5.4px;height:5.2px;background:#45919f"></div>
<div class="a" style="left:1088.9px;top:145.2px;width:5.4px;height:8.2px;background:#3f4253"></div>
<div class="a" style="left:1094.4px;top:140px;width:7.8px;height:13.4px;background:#9899a2"></div>
<div class="a" style="left:1105.8px;top:140px;width:5.4px;height:5.2px;background:#665894"></div>
<div class="a" style="left:1105.8px;top:145.2px;width:5.4px;height:8.2px;background:#3f4253"></div>
<div class="a" style="left:1111.3px;top:140px;width:7.8px;height:13.4px;background:#9899a2"></div>
<div class="a" style="left:1122.7px;top:140px;width:5.4px;height:5.2px;background:#80736c"></div>
<div class="a" style="left:1122.7px;top:145.2px;width:5.4px;height:8.2px;background:#3f4253"></div>
<div class="a" style="left:1128.2px;top:140px;width:7.8px;height:13.4px;background:#9899a2"></div>
<div class="a" style="left:1139.6px;top:140px;width:5.4px;height:5.2px;background:#aa4c51"></div>
<div class="a" style="left:1139.6px;top:145.2px;width:5.4px;height:8.2px;background:#3f4253"></div>
<div class="a" style="left:1145.1px;top:140px;width:7.8px;height:13.4px;background:#9899a2"></div>
</body></html>
